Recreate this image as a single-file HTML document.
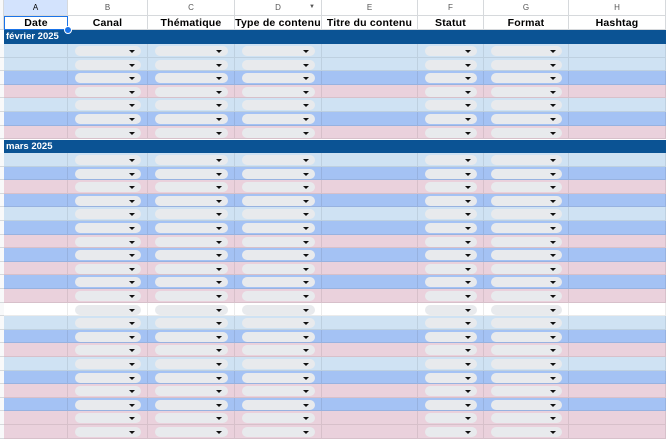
<!DOCTYPE html>
<html><head><meta charset="utf-8"><style>
body{margin:0;width:666px;height:427px;overflow:hidden;background:#fff;font-family:"Liberation Sans",sans-serif;position:relative}
.c{position:absolute;box-sizing:border-box;border-right:1px solid #d6d9dc;border-bottom:1px solid #d6d9dc}
.ch{font-size:8px;color:#555;text-align:center;line-height:15px;background:#fff}
.hd{font-size:10.5px;font-weight:bold;text-align:center;line-height:14px;color:#000;letter-spacing:0.2px}
.band{position:absolute;left:4px;right:0;background:#0b5394;color:#fff;font-weight:bold;font-size:9.5px;line-height:13px;padding-left:2px;box-sizing:border-box}
.chip{position:absolute;height:10px;border-radius:5px;background:#e8eaed}
.chip:after{content:"";position:absolute;right:6px;top:4px;border-left:3px solid transparent;border-right:3px solid transparent;border-top:3px solid #111}
</style></head><body>
<div id="g"></div>
<script>
var cols=[4,68,148,235,322,418,484,569,666];
var letters="ABCDEFGH";
var heads=["Date","Canal","Thématique","Type de contenu","Titre du contenu","Statut","Format","Hashtag"];
var h="";
h+='<div class="c" style="left:0;top:0;width:4px;height:30px;background:#f8f9fa"></div>';
for(var i=0;i<8;i++){
 var l=cols[i],w=cols[i+1]-l;
 h+='<div class="c ch" style="left:'+l+'px;top:0;width:'+w+'px;height:16px;'+(i==0?'background:#d3e3fd;color:#000':'')+'">'+letters[i]+(i==3?'<span style="position:absolute;right:6px;font-size:6px">▼</span>':'')+'</div>';
 h+='<div class="c hd" style="left:'+l+'px;top:16px;width:'+w+'px;height:14px;'+(i==0?'border:1px solid #1a73e8;line-height:12px':'')+'">'+heads[i]+'</div>';
}
var C={L:"#cfe2f3",B:"#a4c2f4",P:"#ead1dc",W:"#ffffff"};
function rows(y,seq){
 for(var r=0;r<seq.length;r++){
  var yy=y+r*13.6;
  h+='<div style="position:absolute;left:0;top:'+yy+'px;width:4px;height:13.6px;border-bottom:1px solid #d6d9dc;box-sizing:border-box;background:#f8f9fa"></div>';
  for(var i=0;i<8;i++){
   var l=cols[i],w=cols[i+1]-l;
   h+='<div class="c" style="left:'+l+'px;top:'+yy+'px;width:'+w+'px;height:13.6px;background:'+C[seq[r]]+';border-color:rgba(0,0,0,0.08)"></div>';
   if([1,2,3,5,6].indexOf(i)>=0){
    h+='<div class="chip" style="left:'+(l+7)+'px;top:'+(yy+2)+'px;width:'+(w-14)+'px"></div>';
   }
  }
 }
}
h+='<div class="band" style="top:30px;height:14px">février 2025</div>';
rows(44,"LLBPLBP");
h+='<div class="band" style="top:140px;height:13px">mars 2025</div>';
rows(153,"LBPBLBPBPBPWLBPLBPBPP");
h+='<div style="position:absolute;left:64px;top:26px;width:6px;height:6px;border-radius:50%;background:#1a73e8;border:1px solid #fff"></div>';
document.getElementById("g").innerHTML=h;
</script>
</body></html>
